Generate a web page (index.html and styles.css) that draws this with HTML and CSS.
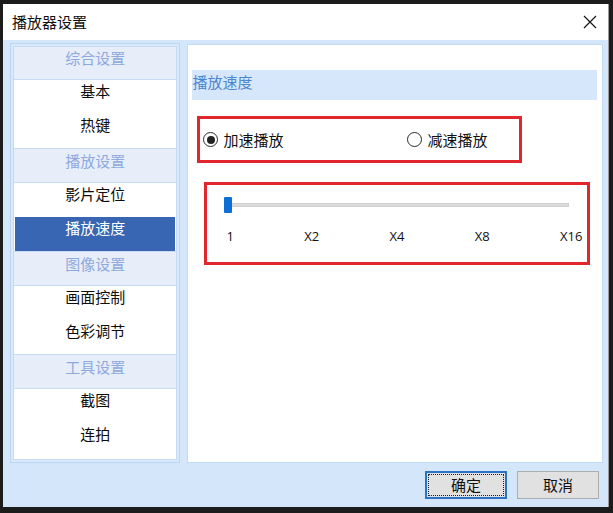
FILE: index.html
```html
<!DOCTYPE html>
<html lang="zh-CN">
<head>
<meta charset="utf-8">
<title>播放器设置</title>
<link rel="stylesheet" href="styles.css">
</head>
<body>
<div class="window">
  <div class="titlebar">
    <span class="title">播放器设置</span>
    <svg class="close" width="14" height="14" viewBox="0 0 14 14"><path d="M1 1 L13 13 M13 1 L1 13" stroke="#1a1a1a" stroke-width="1.3" fill="none"/></svg>
  </div>
  <div class="main">
    <div class="nav-outer">
      <div class="nav">
        <div class="nav-head first">综合设置</div>
        <div class="nav-item">基本</div>
        <div class="nav-item">热键</div>
        <div class="nav-head">播放设置</div>
        <div class="nav-item">影片定位</div>
        <div class="nav-item selected">播放速度</div>
        <div class="nav-head">图像设置</div>
        <div class="nav-item">画面控制</div>
        <div class="nav-item">色彩调节</div>
        <div class="nav-head">工具设置</div>
        <div class="nav-item">截图</div>
        <div class="nav-item">连拍</div>
      </div>
    </div>
    <div class="content">
      <div class="section-title">播放速度</div>
      <div class="box radios">
        <label class="radio"><span class="dot checked"></span>加速播放</label>
        <label class="radio"><span class="dot"></span>减速播放</label>
      </div>
      <div class="box slider-box">
        <div class="slider">
          <div class="track"></div>
          <div class="thumb"></div>
        </div>
        <div class="scale">
          <span>1</span><span>X2</span><span>X4</span><span>X8</span><span>X16</span>
        </div>
      </div>
    </div>
  </div>
  <div class="footer">
    <button class="btn primary"><span class="focus">确定</span></button>
    <button class="btn">取消</button>
  </div>
</div>
</body>
</html>
```

FILE: styles.css
```css
* { box-sizing: border-box; }
html, body { margin: 0; padding: 0; }
body {
  width: 613px;
  height: 513px;
  background: #1c1c1c;
  font-family: "Noto Sans CJK SC", "Noto Sans", sans-serif;
  font-size: 15px;
  color: #111;
  padding: 4px 4px 6px 3px;
  overflow: hidden;
}
.window {
  height: 503px;
  display: flex;
  flex-direction: column;
  background: #d4e6fa;
  border-right: 1px solid #9a9a9a;
}
.titlebar {
  height: 36px;
  flex: none;
  background: #fff;
  display: flex;
  align-items: center;
  justify-content: space-between;
  padding: 0 11px 0 9px;
}
.title { font-size: 15px; line-height: 20px; color: #111; }
.close { display: block; }
.main {
  height: 423px;
  flex: none;
  display: flex;
  padding: 3px 5px 0 7px;
  gap: 7px;
}
.nav-outer {
  width: 171px;
  height: 420px;
  border: 1px solid #bcd5f0;
  background: #d9e9fb;
  padding: 2px;
}
.nav {
  height: 100%;
  background: #fff;
  border: 1px solid #c4daf2;
  display: flex;
  flex-direction: column;
}
.nav-head {
  height: 35px;
  flex: none;
  background: #e7eef9;
  border-top: 1px solid #c6dbf3;
  border-bottom: 1px solid #c6dbf3;
  color: #8fa9de;
  text-align: center;
  line-height: 22px;
  padding-top: 1px;
}
.nav-head.first { border-top: none; height: 33px; padding-top: 0; }
.nav-item {
  height: 34px;
  flex: none;
  text-align: center;
  line-height: 20px;
  padding-top: 1px;
  color: #0c0c0c;
}
.nav-item.selected {
  background: #3866b2;
  color: #fff;
  margin: 0 1px;
  padding-top: 1px;
}
.content {
  width: 417px;
  height: 419px;
  margin-top: 1px;
  background: #fff;
  border: 1px solid #c3daf3;
  padding: 25px 5px 0 4px;
}
.section-title {
  height: 30px;
  background: #d6e6fb;
  color: #4b86cf;
  line-height: 24px;
}
.box {
  border: 3px solid #e3262d;
}
.radios {
  width: 325px;
  height: 47px;
  margin: 16px 0 0 5px;
  display: flex;
  align-items: center;
  padding: 0 0 0 3px;
}
.radio {
  display: flex;
  align-items: center;
  gap: 5px;
  line-height: 20px;
}
.radio + .radio { margin-left: 124px; }
.dot {
  width: 15px;
  height: 15px;
  border: 1.3px solid #2a2a2a;
  border-radius: 50%;
  background: #fff;
  display: flex;
  align-items: center;
  justify-content: center;
}
.dot.checked::after {
  content: "";
  width: 8px;
  height: 8px;
  border-radius: 50%;
  background: #222;
}
.slider-box {
  width: 386px;
  height: 83px;
  margin: 19px 0 0 12px;
  padding: 12px 0 0 17px;
}
.slider {
  position: relative;
  width: 345px;
  height: 16px;
}
.track {
  position: absolute;
  left: 3px;
  right: 0;
  top: 6px;
  height: 4px;
  background: #dcdcdc;
  border: 1px solid #d0d0d0;
}
.thumb {
  position: absolute;
  left: 0;
  top: 0;
  width: 8px;
  height: 16px;
  background: #0b6fd6;
  border-radius: 1px;
}
.scale {
  display: flex;
  justify-content: space-between;
  width: 356px;
  margin: 15px 0 0 2px;
  font-family: "Open Sans", "Liberation Sans", sans-serif;
  font-size: 13px;
  line-height: 16px;
  color: #111;
}
.footer {
  flex: 1;
  display: flex;
  justify-content: flex-end;
  align-items: flex-start;
  gap: 10px;
  padding: 8px 9px 0 0;
}
.btn {
  width: 82px;
  height: 28px;
  background: #e1e1e1;
  border: 1px solid #adadad;
  font-family: "Noto Sans CJK SC", sans-serif;
  font-size: 15px;
  color: #111;
  padding: 0;
  line-height: 24px;
}
.btn.primary {
  border: 2px solid #2b73c6;
  padding: 1px;
}
.focus {
  display: block;
  height: 100%;
  border: 1px dotted #222;
  line-height: 20px;
}
```
